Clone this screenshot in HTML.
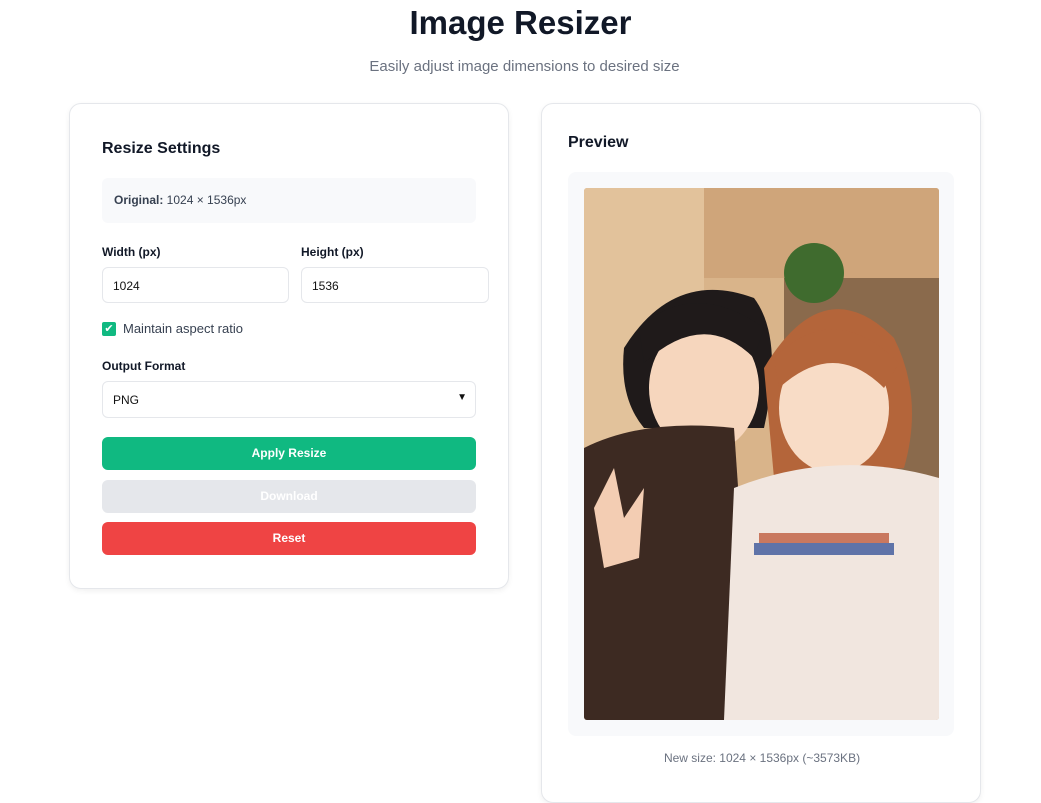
<!DOCTYPE html>
<html><head><style>
*{box-sizing:border-box;margin:0;padding:0}
body{width:1041px;height:768px;overflow:hidden;background:#fff;font-family:"Liberation Sans",sans-serif;color:#111827;position:relative}
h1{position:absolute;top:4px;left:0;width:1041px;text-align:center;font-size:33px;font-weight:bold;color:#111827}
.sub{position:absolute;top:58px;left:0;width:1049px;text-align:center;font-size:15px;color:#6b7280}
.card{position:absolute;background:#fff;border:1px solid #e5e7eb;border-radius:12px;box-shadow:0 2px 6px rgba(0,0,0,.06)}
.abs{position:absolute}
.lbl{font-size:12px;font-weight:bold;color:#111827}
.inp{position:absolute;height:36px;border:1px solid #e5e7eb;border-radius:6px;font-size:12px;padding:11px 10px;color:#111}
.btn{position:absolute;left:32px;width:374px;height:33px;border-radius:6px;color:#fff;font-size:12px;font-weight:bold;text-align:center;line-height:33px}
</style></head><body>
<h1>Image Resizer</h1>
<div class="sub">Easily adjust image dimensions to desired size</div>

<div class="card" style="left:69px;top:103px;width:440px;height:486px">
 <div class="abs" style="left:32px;top:36px;font-size:16px;font-weight:bold">Resize Settings</div>
 <div class="abs" style="left:32px;top:74px;width:374px;height:45px;background:#f8f9fb;border-radius:6px;font-size:12px;color:#374151;padding:15px 12px"><b>Original:</b> 1024 × 1536px</div>
 <div class="abs lbl" style="left:32px;top:141px">Width (px)</div>
 <div class="abs lbl" style="left:231px;top:141px">Height (px)</div>
 <div class="inp" style="left:32px;top:163px;width:187px">1024</div>
 <div class="inp" style="left:231px;top:163px;width:188px">1536</div>
 <div class="abs" style="left:32px;top:218px;width:14px;height:14px;background:#10b981;border-radius:2px;color:#fff;font-size:11px;line-height:14px;text-align:center">✔</div>
 <div class="abs" style="left:53px;top:217px;font-size:13px;color:#374151">Maintain aspect ratio</div>
 <div class="abs lbl" style="left:32px;top:255px">Output Format</div>
 <div class="inp" style="left:32px;top:277px;width:374px;height:37px;font-size:12px">PNG<span style="position:absolute;right:8px;top:10px;font-size:10px">&#9660;</span></div>
 <div class="btn" style="top:333px;background:#10b981">Apply Resize</div>
 <div class="btn" style="top:376px;background:#e5e7eb">Download</div>
 <div class="btn" style="top:418px;background:#ef4444">Reset</div>
</div>

<div class="card" style="left:541px;top:103px;width:440px;height:700px">
 <div class="abs" style="left:26px;top:30px;font-size:16px;font-weight:bold">Preview</div>
 <div class="abs" style="left:26px;top:68px;width:386px;height:564px;background:#f8f9fb;border-radius:8px"></div>
 <svg class="abs" style="left:42px;top:84px;border-radius:3px" width="355" height="532" viewBox="0 0 355 532">
  <rect width="355" height="532" fill="#d9b48a"/>
  <rect x="0" y="0" width="120" height="532" fill="#e2c29b"/>
  <rect x="120" y="0" width="235" height="90" fill="#cfa57a"/>
  <rect x="200" y="90" width="155" height="200" fill="#8a6a4c"/>
  <circle cx="230" cy="85" r="30" fill="#3f6b2e"/>
  <path d="M40 160 Q90 80 170 110 Q200 150 180 240 L60 240 Q35 210 40 160Z" fill="#1f1a1a"/>
  <ellipse cx="120" cy="200" rx="55" ry="65" fill="#f6d6bd"/>
  <path d="M55 140 Q110 90 180 140 L170 170 Q120 120 60 175Z" fill="#1f1a1a"/>
  <path d="M0 260 Q60 230 150 240 L170 532 L0 532Z" fill="#3d2a22"/>
  <path d="M180 180 Q240 80 310 150 Q340 210 320 280 L190 290Z" fill="#b4653a"/>
  <ellipse cx="250" cy="220" rx="55" ry="65" fill="#f8dcc6"/>
  <path d="M190 170 Q250 110 315 175 L300 200 Q250 150 195 200Z" fill="#b4653a"/>
  <path d="M150 300 Q250 260 355 290 L355 532 L140 532Z" fill="#f1e6df"/>
  <rect x="170" y="355" width="140" height="12" fill="#5f73a8"/>
  <rect x="175" y="345" width="130" height="10" fill="#c9785f"/>
  <path d="M10 320 L30 280 L40 330 L60 300 L55 370 L20 380Z" fill="#f3cdb3"/>
 </svg>
 <div class="abs" style="left:0;top:647px;width:440px;text-align:center;font-size:12px;color:#6b7280">New size: 1024 × 1536px (~3573KB)</div>
</div>
</body></html>
